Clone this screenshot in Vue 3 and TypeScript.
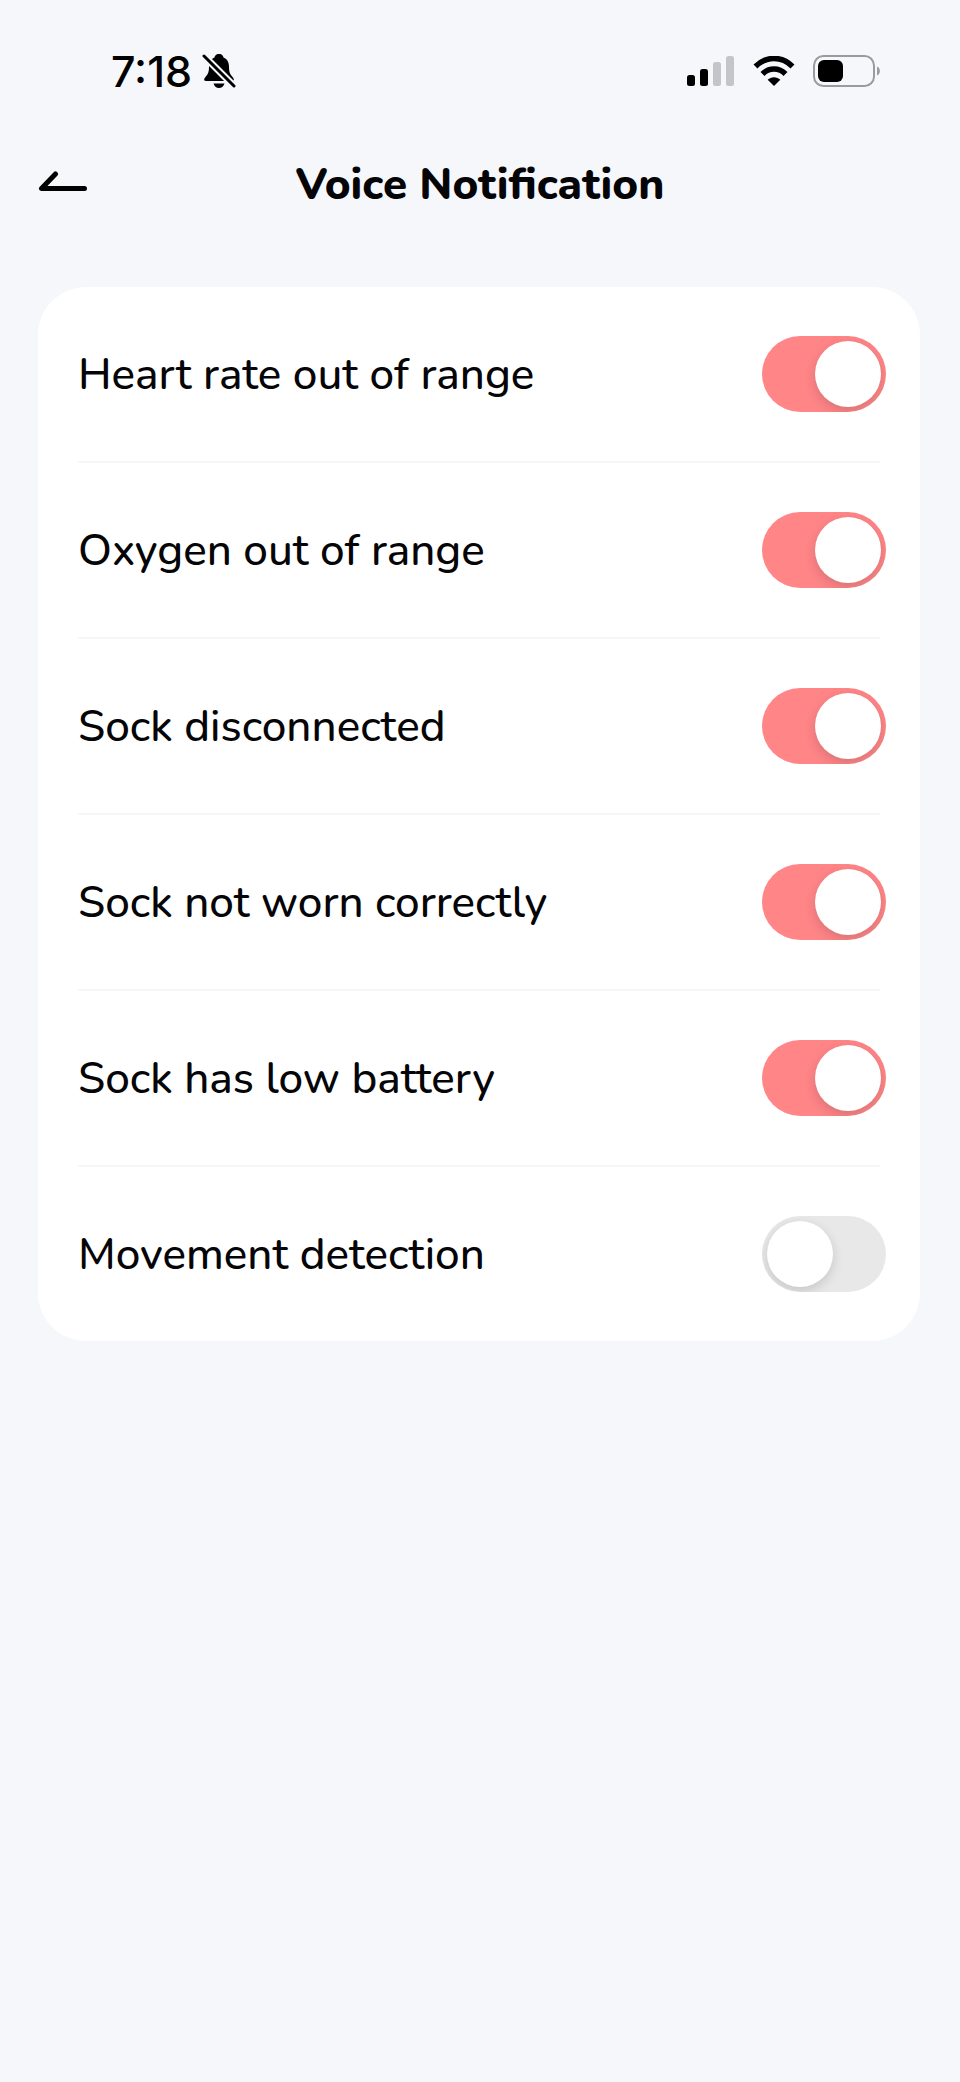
<script setup lang="ts">
import { ref } from 'vue'

interface Setting {
  id: string
  label: string
  enabled: boolean
}

const settings = ref<Setting[]>([
  { id: 'heart-rate', label: 'Heart rate out of range', enabled: true },
  { id: 'oxygen', label: 'Oxygen out of range', enabled: true },
  { id: 'disconnected', label: 'Sock disconnected', enabled: true },
  { id: 'not-worn', label: 'Sock not worn correctly', enabled: true },
  { id: 'low-battery', label: 'Sock has low battery', enabled: true },
  { id: 'movement', label: 'Movement detection', enabled: false },
])
</script>

<template>
  <div class="screen">
    <div class="status-bar">
      <div class="status-left">
        <span class="time">7:18</span>
        <svg class="bell" width="34" height="36" viewBox="0 0 34 36" aria-hidden="true">
          <path
            d="M17 1C13.800 1 12.800 3 12.500 4.500C8.500 6 7 9.500 7 14C7 20 5.500 21.500 3 24.500C1.500 26.500 2 28 4 28H30C32 28 32.500 26.500 31 24.500C28.500 21.500 27 20 27 14C27 9.500 25.500 6 21.500 4.500C21.200 3 20.200 1 17 1Z"
          />
          <path d="M11.500 30.500H22.500C21.500 33.500 19.500 35 17 35S12.500 33.500 11.500 30.500Z" />
          <path class="bell-gap" d="M2 3L32 33" />
          <path class="bell-slash" d="M2 3L32 33" />
        </svg>
      </div>
      <div class="status-right">
        <svg width="48" height="30" viewBox="0 0 48 30" aria-hidden="true">
          <rect x="0" y="19" width="8" height="11" rx="2.500" />
          <rect x="13" y="13" width="8" height="17" rx="2.500" />
          <rect class="faint" x="26" y="6" width="8" height="24" rx="2.500" />
          <rect class="faint" x="39" y="0" width="8" height="30" rx="2.500" />
        </svg>
        <svg width="42" height="30" viewBox="0 0 42 30" aria-hidden="true">
          <path class="wave" d="M2.500 10.500C13 -0.300 29 -0.300 39.500 10.500" />
          <path class="wave" d="M9.500 18C16 11.300 26 11.300 32.500 18" />
          <path d="M21 30L14.700 23.700C18 20.300 24 20.300 27.300 23.700Z" />
        </svg>
        <svg width="68" height="32" viewBox="0 0 68 32" aria-hidden="true">
          <rect class="shell" x="1" y="1" width="60" height="30" rx="9.500" />
          <rect x="5" y="5" width="25" height="22" rx="6" />
          <path class="cap" d="M64 11.500C67.800 13 67.800 19 64 20.500Z" />
        </svg>
      </div>
    </div>

    <header class="header">
      <button class="back" type="button" aria-label="Back">
        <svg width="52" height="28" viewBox="0 0 52 28" aria-hidden="true">
          <path d="M17.500 3L3.500 17.500H46.500" />
        </svg>
      </button>
      <h1 class="title">Voice Notification</h1>
    </header>

    <main class="content">
      <ul class="card">
        <li v-for="item in settings" :key="item.id" class="row">
          <label class="label" :for="item.id">{{ item.label }}</label>
          <input :id="item.id" v-model="item.enabled" class="toggle" type="checkbox" role="switch" />
        </li>
      </ul>
    </main>
  </div>
</template>

<style>
body {
  margin: 0;
  background: #f5f7fb;
}
</style>

<style scoped>
.screen {
  min-height: 100vh;
  background: #f5f7fb;
  color: #050507;
  font-family: Nunito, "Noto Sans", sans-serif;
}

.status-bar {
  display: flex;
  align-items: center;
  justify-content: space-between;
  height: 142px;
  padding: 0 79px 0 111px;
  box-sizing: border-box;
}

.status-left,
.status-right {
  display: flex;
  align-items: center;
}

.status-left {
  gap: 10px;
}

.status-right {
  gap: 18px;
}

.time {
  font-family: Inter, sans-serif;
  font-size: 43px;
  font-weight: 500;
  line-height: 48px;
  color: #000;
}

.bell-gap,
.bell-slash {
  fill: none;
  stroke-linecap: round;
}

.bell-gap {
  stroke: #f5f7fb;
  stroke-width: 7;
}

.bell-slash {
  stroke: #000;
  stroke-width: 3;
}

.faint {
  fill: #c4c5c8;
}

.wave {
  fill: none;
  stroke: #000;
  stroke-width: 5.500;
}

.shell {
  fill: none;
  stroke: #9a9b9e;
  stroke-width: 2;
}

.cap {
  fill: #9a9b9e;
}

.header {
  display: grid;
  grid-template-columns: 80px 1fr 80px;
  align-items: center;
  height: 86px;
  padding: 0 38px;
}

.back {
  display: flex;
  padding: 0;
  border: 0;
  background: none;
  cursor: pointer;
}

.back path {
  fill: none;
  stroke: #000;
  stroke-width: 5;
  stroke-linecap: round;
  stroke-linejoin: round;
}

.title {
  margin: 0;
  font-size: 44px;
  font-weight: 800;
  line-height: 56px;
  text-align: center;
  white-space: nowrap;
}

.content {
  padding: 59px 40px 0 38px;
}

.card {
  margin: 0;
  padding: 0 40px;
  list-style: none;
  background: #fff;
  border-radius: 48px;
}

.row {
  display: flex;
  align-items: center;
  justify-content: space-between;
  height: 174px;
  border-bottom: 2px solid #f6f6f8;
}

.row:last-child {
  border-bottom: 0;
}

.label {
  padding-top: 2px;
  font-size: 44px;
  font-weight: 550;
  line-height: 56px;
}

.toggle {
  appearance: none;
  display: flex;
  flex: none;
  align-items: center;
  box-sizing: border-box;
  width: 124px;
  height: 76px;
  margin: 0 -6px 0 0;
  padding: 0 5px;
  overflow: hidden;
  border-radius: 38px;
  background: #e8e8e8;
  cursor: pointer;
}

.toggle::before {
  content: "";
  width: 66px;
  height: 66px;
  border-radius: 50%;
  background: #fff;
  box-shadow: 0 4px 12px rgba(0, 0, 0, 0.15);
}

.toggle:checked {
  justify-content: flex-end;
  background: #ff8587;
}
</style>
